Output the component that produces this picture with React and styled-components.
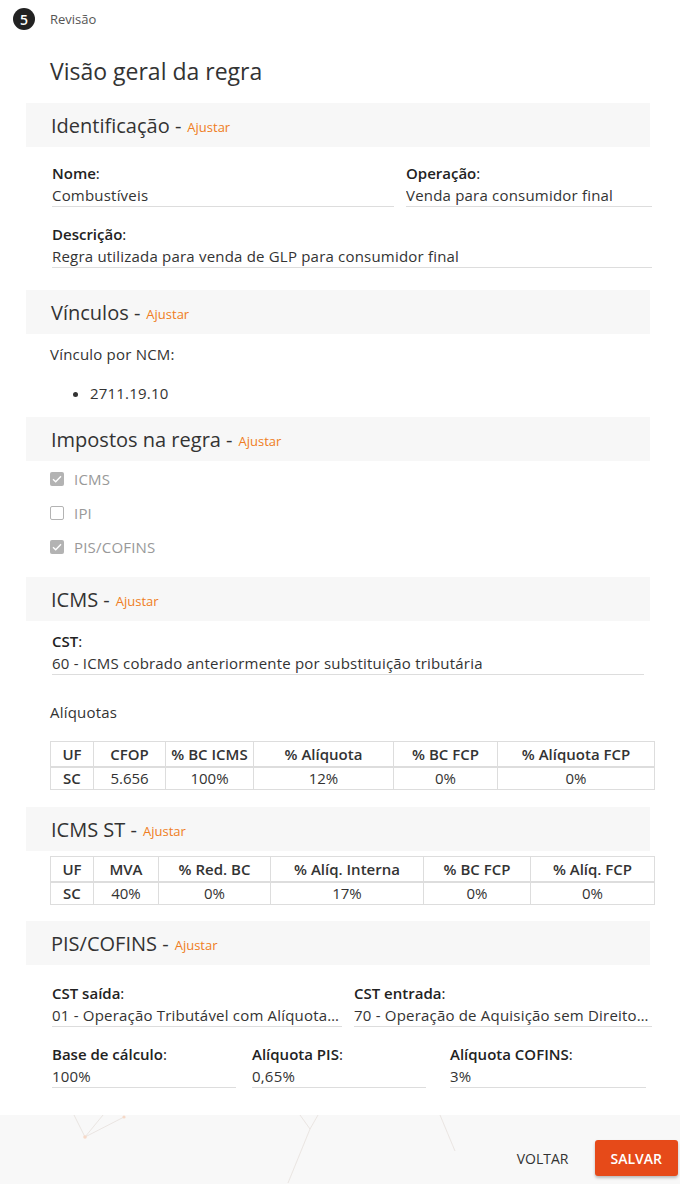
import React from "react";
import styled, { createGlobalStyle } from "styled-components";

const GlobalStyle = createGlobalStyle`
  body {
    margin: 0;
    font-family: "Open Sans", "Noto Sans", sans-serif;
    color: #333;
  }
  * { box-sizing: border-box; }
`;

const Page = styled.div`
  width: 680px;
  min-height: 1184px;
  background: #f8f8f8;
  display: flex;
  flex-direction: column;
`;

const Card = styled.div`
  background: #fff;
  padding-bottom: 27px;
`;

const StepHeader = styled.div`
  display: flex;
  align-items: center;
  gap: 15px;
  height: 38px;
  padding: 0 0 0 13px;
  font-size: 13px;
  color: #555;
`;

const Badge = styled.span`
  width: 22px;
  height: 22px;
  border-radius: 50%;
  background: #222;
  color: #fff;
  display: flex;
  align-items: center;
  justify-content: center;
  font-size: 14px;
  font-weight: 600;
`;

const Content = styled.div`
  padding: 0 26px;
  letter-spacing: 0.2px;
`;

const Title = styled.h1`
  margin: 0;
  padding: 18px 0 0 24px;
  height: 65px;
  font-size: 23px;
  font-weight: 400;
  line-height: 30px;
  letter-spacing: 0;
  color: #333;
`;

const SectionBar = styled.div`
  height: 44px;
  margin-right: 4px;
  margin-top: ${(p) => p.$top || 0}px;
  background: #f7f7f7;
  display: flex;
  align-items: center;
  padding-left: 25px;
  font-size: 20px;
  font-weight: 400;
  letter-spacing: 0;
  color: #333;
`;

const Adjust = styled.a`
  font-size: 13px;
  font-weight: 400;
  color: #ef7d22;
  margin-left: 6px;
  padding-top: 4px;
  cursor: pointer;
`;

const FieldGrid = styled.div`
  display: grid;
  grid-template-columns: ${(p) => p.$cols};
  column-gap: ${(p) => p.$gap ?? 12}px;
  padding: 0 0 0 26px;
  margin-top: ${(p) => p.$top || 0}px;
`;

const Field = styled.div`
  min-width: 0;
  padding-right: ${(p) => p.$pr || 0}px;
`;

const Label = styled.div`
  font-size: 15px;
  line-height: 20px;
  color: #222;
  letter-spacing: 0;
  b { font-weight: 600; }
`;

const Value = styled.div`
  font-size: 15px;
  line-height: 21px;
  padding-top: 2px;
  color: #333;
  border-bottom: 1px solid #ddd;
  white-space: nowrap;
  overflow: hidden;
  text-overflow: ellipsis;
`;

const Text = styled.div`
  font-size: 15px;
  line-height: 20px;
  padding-left: 24px;
  margin-top: ${(p) => p.$top || 0}px;
  color: #333;
`;

const BulletList = styled.ul`
  margin: 19px 0 0;
  padding-left: 64px;
  font-size: 15px;
  line-height: 20px;
`;

const CheckList = styled.div`
  padding: 1px 0 13px 24px;
  display: flex;
  flex-direction: column;
`;

const CheckRow = styled.div`
  height: 34px;
  display: flex;
  align-items: center;
  gap: 10px;
  font-size: 15px;
  color: #999;
`;

const Box = styled.span`
  width: 14px;
  height: 14px;
  border-radius: 2px;
  background: ${(p) => (p.$on ? "#b3b3b3" : "#fff")};
  border: ${(p) => (p.$on ? "none" : "1.5px solid #b3b3b3")};
  display: flex;
  align-items: center;
  justify-content: center;
`;

const Table = styled.table`
  width: 604px;
  margin-left: 24px;
  margin-top: ${(p) => p.$top || 0}px;
  border-collapse: collapse;
  table-layout: fixed;
  font-size: 15px;
  letter-spacing: 0;
  color: #333;

  th, td {
    border: 1px solid #ddd;
    text-align: center;
    padding: 0;
  }
  th {
    height: 25px;
    font-weight: 600;
    border-bottom: 2px solid #ddd;
  }
  td {
    height: 23px;
  }
  td:first-child { font-weight: 600; }
`;

const Footer = styled.div`
  flex: 1;
  position: relative;
  display: flex;
  justify-content: flex-end;
  align-items: flex-start;
  gap: 10px;
  padding: 25px 2px 0 0;
`;

const Network = styled.svg`
  position: absolute;
  left: 0;
  top: 0;
  width: 680px;
  height: 68px;
  pointer-events: none;
`;

const Button = styled.button`
  position: relative;
  height: 36px;
  padding: 0 16px;
  border: none;
  border-radius: 3px;
  font-family: inherit;
  font-size: 14px;
  font-weight: ${(p) => (p.$primary ? 600 : 400)};
  background: ${(p) => (p.$primary ? "#e64a19" : "transparent")};
  color: ${(p) => (p.$primary ? "#fff" : "#333")};
  box-shadow: ${(p) => (p.$primary ? "0 2px 3px rgba(0,0,0,0.25)" : "none")};
  cursor: pointer;
`;

const Check = () => (
  <svg width="10" height="8" viewBox="0 0 10 8">
    <path d="M1 4.2 L3.7 6.7 L9 1.2" fill="none" stroke="#fff" strokeWidth="1.4" />
  </svg>
);

const Section = ({ title, top, children }) => (
  <>
    <SectionBar $top={top}>
      {title} -<Adjust>Ajustar</Adjust>
    </SectionBar>
    {children}
  </>
);

const FieldItem = ({ label, value, pr }) => (
  <Field $pr={pr}>
    <Label>
      <b>{label}</b>:
    </Label>
    <Value>{value}</Value>
  </Field>
);

const icmsCols = [43, 72, 88, 140, 104, 157];
const icmsHead = ["UF", "CFOP", "% BC ICMS", "% Alíquota", "% BC FCP", "% Alíquota FCP"];
const icmsRow = ["SC", "5.656", "100%", "12%", "0%", "0%"];

const stCols = [43, 65, 112, 153, 107, 124];
const stHead = ["UF", "MVA", "% Red. BC", "% Alíq. Interna", "% BC FCP", "% Alíq. FCP"];
const stRow = ["SC", "40%", "0%", "17%", "0%", "0%"];

const RateTable = ({ cols, head, row, top }) => (
  <Table $top={top}>
    <colgroup>
      {cols.map((w, i) => (
        <col key={i} style={{ width: w }} />
      ))}
    </colgroup>
    <thead>
      <tr>
        {head.map((h) => (
          <th key={h}>{h}</th>
        ))}
      </tr>
    </thead>
    <tbody>
      <tr>
        {row.map((c, i) => (
          <td key={i}>{c}</td>
        ))}
      </tr>
    </tbody>
  </Table>
);

const taxes = [
  { name: "ICMS", on: true },
  { name: "IPI", on: false },
  { name: "PIS/COFINS", on: true },
];

const App = () => {
  return (
    <Page>
      <GlobalStyle />
      <Card>
        <StepHeader>
          <Badge>5</Badge>
          Revisão
        </StepHeader>
        <Content>
          <Title>Visão geral da regra</Title>

          <Section title="Identificação">
            <FieldGrid $cols="342px 246px" $top={16}>
              <FieldItem label="Nome" value="Combustíveis" />
              <FieldItem label="Operação" value="Venda para consumidor final" />
            </FieldGrid>
            <FieldGrid $cols="600px" $top={17}>
              <FieldItem label="Descrição" value="Regra utilizada para venda de GLP para consumidor final" />
            </FieldGrid>
          </Section>

          <Section title="Vínculos" top={22}>
            <Text $top={10}>Vínculo por NCM:</Text>
            <BulletList>
              <li>2711.19.10</li>
            </BulletList>
          </Section>

          <Section title="Impostos na regra" top={14}>
            <CheckList>
              {taxes.map((t) => (
                <CheckRow key={t.name}>
                  <Box $on={t.on}>{t.on && <Check />}</Box>
                  {t.name}
                </CheckRow>
              ))}
            </CheckList>
          </Section>

          <Section title="ICMS">
            <FieldGrid $cols="592px" $top={10}>
              <FieldItem label="CST" value="60 - ICMS cobrado anteriormente por substituição tributária" />
            </FieldGrid>
            <Text $top={27}>Alíquotas</Text>
            <RateTable cols={icmsCols} head={icmsHead} row={icmsRow} top={19} />
          </Section>

          <Section title="ICMS ST" top={17}>
            <RateTable cols={stCols} head={stHead} row={stRow} top={5} />
          </Section>

          <Section title="PIS/COFINS" top={16}>
            <FieldGrid $cols="290px 298px" $top={18}>
              <FieldItem label="CST saída" value="01 - Operação Tributável com Alíquota Básica" />
              <FieldItem label="CST entrada" value="70 - Operação de Aquisição sem Direito a Crédito" />
            </FieldGrid>
            <FieldGrid $cols="200px 198px 196px" $gap={0} $top={17}>
              <FieldItem label="Base de cálculo" value="100%" pr={16} />
              <FieldItem label="Alíquota PIS" value="0,65%" pr={24} />
              <FieldItem label="Alíquota COFINS" value="3%" />
            </FieldGrid>
          </Section>
        </Content>
      </Card>
      <Footer>
        <Network viewBox="0 0 680 68">
          <g stroke="#e6e0dc" strokeWidth="0.8" fill="none">
            <path d="M74 0 L85 22 L124 2 M103 0 L85 22" />
            <path d="M300 0 L310 14 L318 0 M310 14 L288 68" />
            <path d="M440 0 L455 36" />
          </g>
          <circle cx="85" cy="22" r="1.8" fill="#f6d9c8" />
          <circle cx="124" cy="2" r="1.6" fill="#f6d9c8" />
        </Network>
        <Button>VOLTAR</Button>
        <Button $primary>SALVAR</Button>
      </Footer>
    </Page>
  );
};

export default App;
